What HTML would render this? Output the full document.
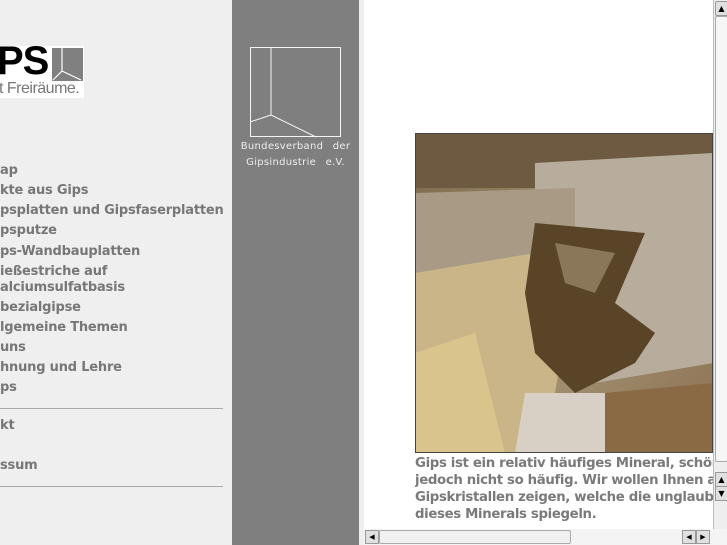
<!DOCTYPE html>
<html><head><meta charset="utf-8"><style>
*{margin:0;padding:0}
body{width:727px;height:545px;overflow:hidden;position:relative;background:#fff;font-family:"DejaVu Sans","Liberation Sans",sans-serif}
#left{position:absolute;left:0;top:0;width:232px;height:545px;background:#efefef}
#gray{position:absolute;left:232px;top:0;width:127px;height:545px;background:#7f7f7f}
#strip{position:absolute;left:359px;top:0;width:5px;height:545px;background:#efefef}
.m{position:absolute;left:0;font-size:13px;font-weight:bold;color:#777;white-space:nowrap;line-height:16px;letter-spacing:-0.2px}
.hr{position:absolute;left:0;width:223px;height:1px;background:#aaa}
.bv{position:absolute;left:232px;width:127px;text-align:center;color:#eee;font-size:10px;word-spacing:6px;letter-spacing:0.3px}
#txt{position:absolute;left:415px;top:455px;width:298px;font-size:13.3px;font-weight:bold;color:#7a7a7a;line-height:17px;white-space:nowrap;overflow:hidden;letter-spacing:-0.35px}
#vs{position:absolute;left:713px;top:0;width:14px;height:529px;background:#eeeeee;border-left:1px solid #bbb}
#hs{position:absolute;left:364px;top:529px;width:363px;height:16px;background:#f4f4f4}
</style></head><body>
<div id="left"></div>
<div style="position:absolute;left:0;top:46px;width:84px;height:52px;background:#fff"></div>
<div style="position:absolute;left:-3px;top:39px;font:bold 40px 'Liberation Sans',sans-serif;color:#000;letter-spacing:-1px">PS</div>
<svg style="position:absolute;left:52px;top:48px" width="31" height="33"><rect width="31" height="33" fill="#808080"/><path d="M10 0V23L1 32M10 23L29 32" stroke="#fff" stroke-width="1.2" fill="none"/></svg>
<div style="position:absolute;left:-1px;top:80px;font:16px 'Liberation Sans',sans-serif;color:#777;letter-spacing:-0.5px">t Freiräume.</div>
<div class="m" style="top:163px">ap</div>
<div class="m" style="top:183px">kte aus Gips</div>
<div class="m" style="top:203px">psplatten und Gipsfaserplatten</div>
<div class="m" style="top:223px">psputze</div>
<div class="m" style="top:244px">ps-Wandbauplatten</div>
<div class="m" style="top:264px">ießestriche auf</div>
<div class="m" style="top:280px">alciumsulfatbasis</div>
<div class="m" style="top:300px">bezialgipse</div>
<div class="m" style="top:320px">lgemeine Themen</div>
<div class="m" style="top:340px">uns</div>
<div class="m" style="top:360px">hnung und Lehre</div>
<div class="m" style="top:380px">ps</div>
<div class="hr" style="top:408px"></div>
<div class="m" style="top:418px">kt</div>
<div class="m" style="top:458px">ssum</div>
<div class="hr" style="top:486px"></div>
<div id="gray"></div>
<svg style="position:absolute;left:250px;top:47px" width="92" height="91"><rect x="0.5" y="0.5" width="90" height="89" fill="none" stroke="#f4f4f4"/><path d="M21 0V68L0 75M21 68L66 90" stroke="#f4f4f4" fill="none"/></svg>
<div class="bv" style="top:141px">Bundesverband der</div>
<div class="bv" style="top:157px">Gipsindustrie e.V.</div>
<div id="strip"></div>
<svg style="position:absolute;left:415px;top:133px" width="298" height="320">
<defs><linearGradient id="g" x1="0" y1="0" x2="1" y2="1"><stop offset="0" stop-color="#7a6446"/><stop offset="0.5" stop-color="#a8977a"/><stop offset="1" stop-color="#8a7050"/></linearGradient></defs>
<rect width="298" height="320" fill="url(#g)"/>
<rect x="0" y="0" width="298" height="55" fill="#6e5a40"/>
<polygon points="120,30 298,20 298,230 180,250 120,130" fill="#b8ad9c"/>
<polygon points="0,60 160,55 160,130 0,140" fill="#a89a84"/>
<polygon points="0,140 120,120 150,200 130,320 0,320" fill="#c9b588"/>
<polygon points="0,220 60,200 90,320 0,320" fill="#d9c58c"/>
<polygon points="120,90 230,100 200,170 240,200 220,230 160,260 120,220 110,160" fill="#5a4428"/>
<polygon points="140,110 200,120 180,160 150,150" fill="#8a7658"/>
<polygon points="110,260 190,260 200,320 100,320" fill="#d8d0c4"/>
<polygon points="190,260 298,250 298,320 190,320" fill="#8a6a44"/>
<rect x="0.5" y="0.5" width="297" height="319" fill="none" stroke="#444"/>
</svg>
<div id="txt">Gips ist ein relativ häufiges Mineral, schön<br>jedoch nicht so häufig. Wir wollen Ihnen a<br>Gipskristallen zeigen, welche die unglaub<br>dieses Minerals spiegeln.</div>
<div id="vs">
<div style="position:absolute;left:1px;top:1px;width:11px;height:13px;background:#e0e0e0;border:1px solid #999;border-radius:2px;font-size:8px;text-align:center;line-height:13px">▲</div>
<div style="position:absolute;left:1px;top:16px;width:11px;height:444px;background:#f6f6f6;border:1px solid #aaa;border-radius:2px"></div>
<div style="position:absolute;left:1px;top:472px;width:11px;height:13px;background:#e0e0e0;border:1px solid #999;font-size:8px;text-align:center;line-height:13px">▲</div>
<div style="position:absolute;left:1px;top:486px;width:11px;height:13px;background:#e0e0e0;border:1px solid #999;font-size:8px;text-align:center;line-height:13px">▼</div>
</div>
<div id="hs">
<div style="position:absolute;left:1px;top:1px;width:12px;height:12px;background:#e0e0e0;border:1px solid #999;font-size:7px;text-align:center;line-height:12px">◀</div>
<div style="position:absolute;left:15px;top:1px;width:190px;height:12px;background:#f0f0f0;border:1px solid #aaa;border-radius:2px"></div>
<div style="position:absolute;left:318px;top:1px;width:12px;height:12px;background:#e0e0e0;border:1px solid #999;font-size:7px;text-align:center;line-height:12px">◀</div>
<div style="position:absolute;left:332px;top:1px;width:12px;height:12px;background:#e0e0e0;border:1px solid #999;font-size:7px;text-align:center;line-height:12px">▶</div>
</div>
</body></html>
